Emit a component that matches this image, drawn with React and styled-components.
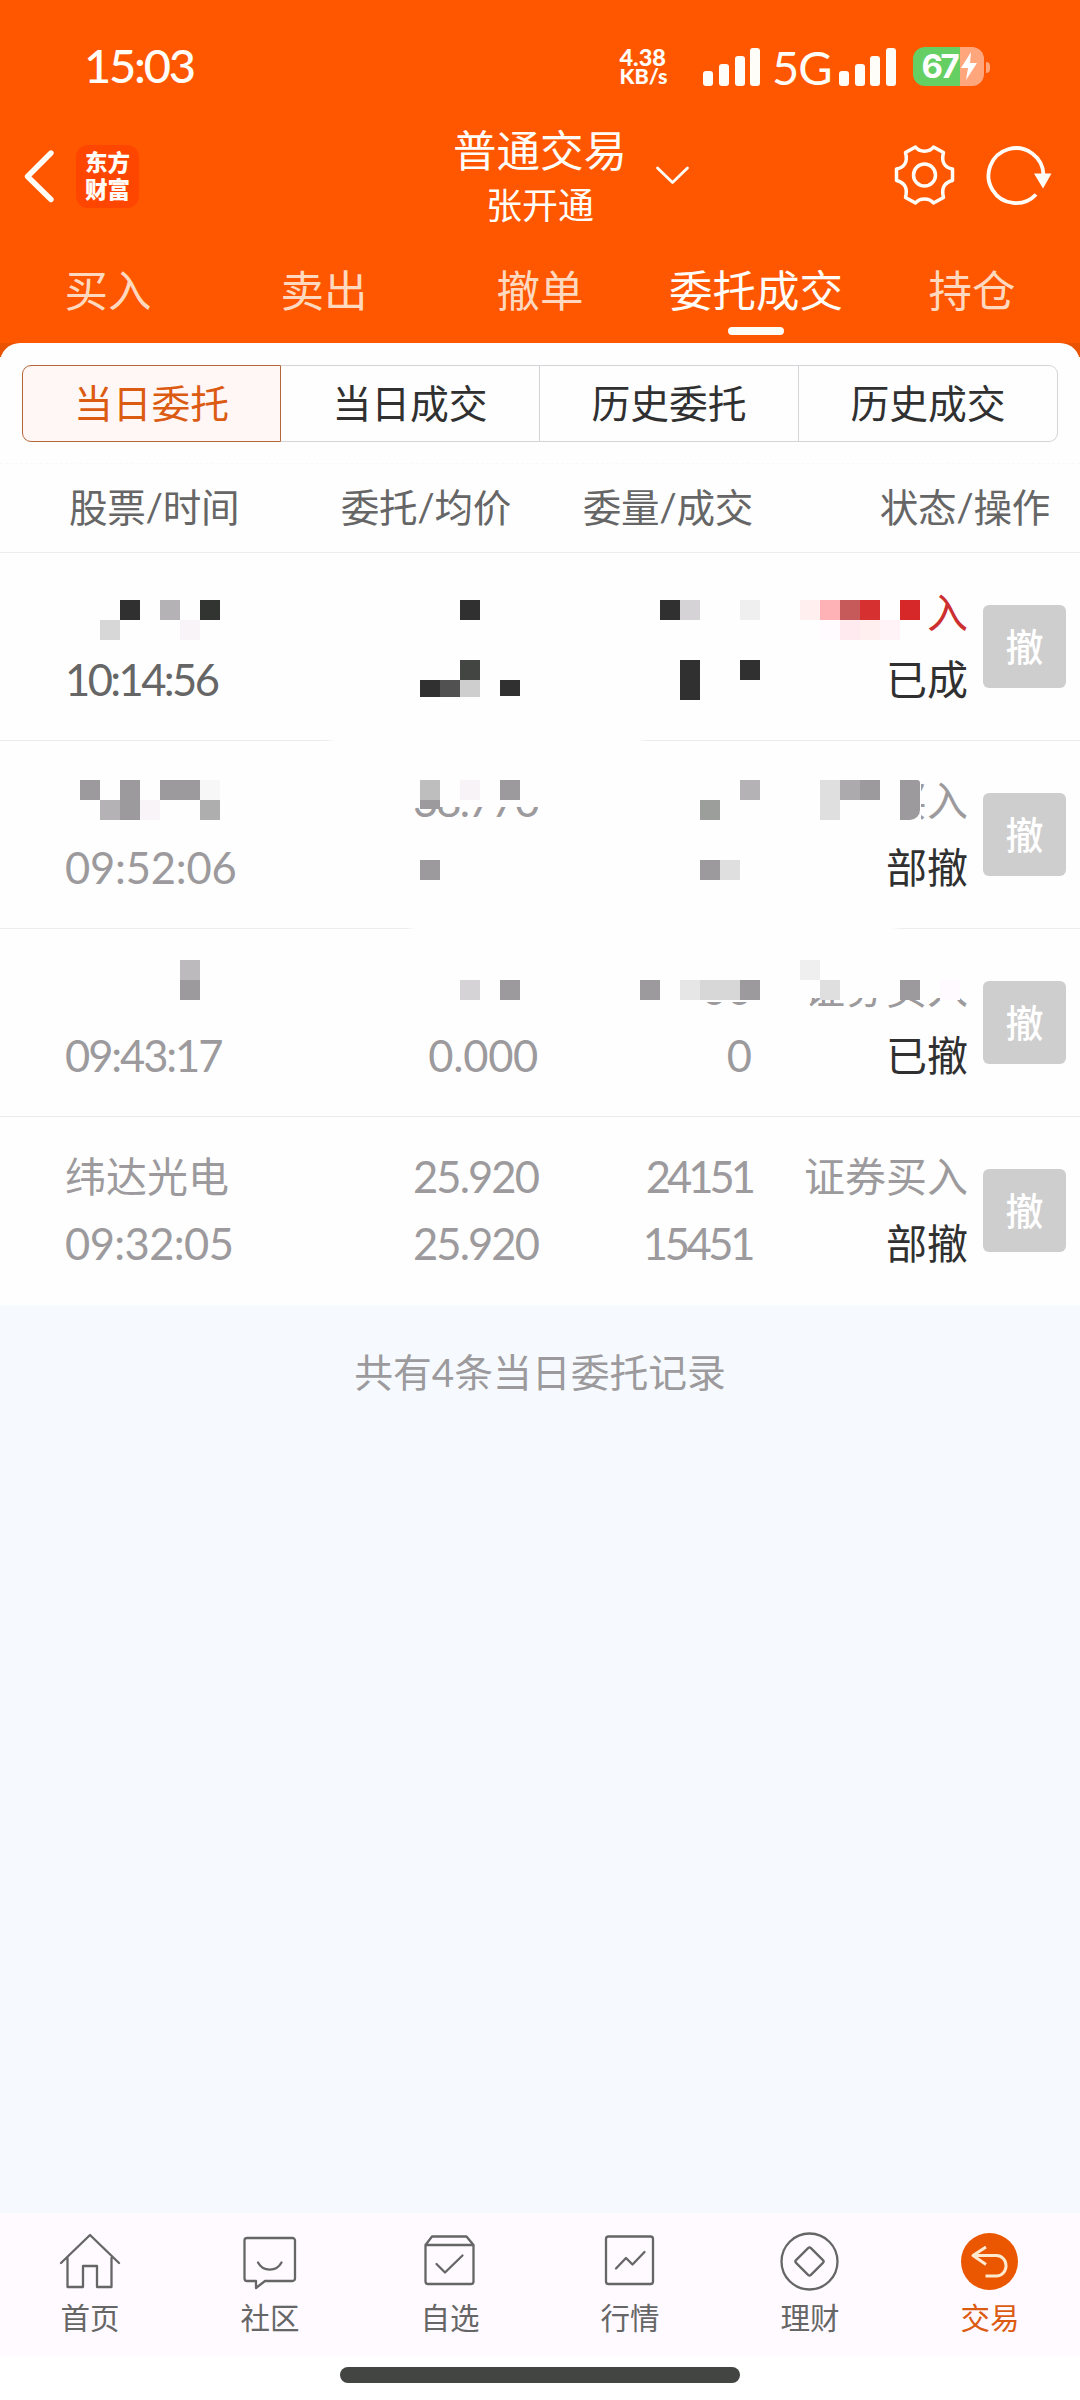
import React from "react";
import styled, { createGlobalStyle } from "styled-components";

const GlobalStyle = createGlobalStyle`
  * { box-sizing: border-box; }
  body {
    margin: 0;
    background: #ffffff;
    font-family: "Lato", "Noto Sans CJK SC", sans-serif;
    font-weight: 400;
  }
`;

const Screen = styled.div`
  width: 1080px;
  height: 2400px;
  display: flex;
  flex-direction: column;
  overflow: hidden;
  background: #f6faff;
`;

/* ---------- top area ---------- */

const Header = styled.header`
  height: 343px;
  flex: none;
  background: #ff5700;
  color: #fffdf8;
`;

const StatusBar = styled.div`
  height: 130px;
  display: flex;
  align-items: center;
  padding: 4px 90px 0 84px;
`;

const Clock = styled.div`
  font-size: 47px;
  line-height: 60px;
  font-weight: 500;
  letter-spacing: -2.2px;
  margin: -4px auto 0 0;
`;

const NetSpeed = styled.div`
  display: flex;
  flex-direction: column;
  width: 54px;
  margin-right: 30px;
  font-weight: 900;
`;

const NetValue = styled.span`
  font-size: 23.5px;
  line-height: 19px;
`;

const NetUnit = styled.span`
  font-size: 21.5px;
  line-height: 19px;
`;

const SignalBars = styled.div`
  display: flex;
  align-items: flex-end;
  gap: 5.6px;
  height: 38px;
`;

const SignalBar = styled.i`
  width: 10px;
  height: ${(p) => p.$h}px;
  border-radius: 3px;
  background: #fffdf8;
`;

const NetType = styled.div`
  width: 79px;
  padding-left: 4px;
  text-align: center;
  font-size: 47px;
  line-height: 60px;
  letter-spacing: -1px;
`;

const BatteryBody = styled.div`
  display: flex;
  align-items: center;
  justify-content: center;
  gap: 3px;
  width: 71px;
  height: 39px;
  margin-left: 17px;
  margin-top: -2px;
  padding-left: 3px;
  border-radius: 12px;
  color: #ffffff;
  font: 700 33px/39px "Inter", sans-serif;
  letter-spacing: -2.4px;
  background: linear-gradient(90deg, #66cf63 0 66%, #ffa67c 66%);
`;

const BatteryTip = styled.i`
  width: 4px;
  height: 11px;
  margin-left: 2px;
  border-radius: 0 5px 5px 0;
  background: #ffa67c;
`;

const TitleBar = styled.div`
  height: 112px;
  display: grid;
  grid-template-columns: 440px 200px 440px;
`;

const TitleLeft = styled.div`
  display: flex;
  align-items: center;
  gap: 20px;
  padding: 0 0 20px 22px;
`;

const Logo = styled.div`
  width: 63px;
  height: 63px;
  border-radius: 12px;
  background: #ff4600;
  display: flex;
  flex-direction: column;
  align-items: center;
  justify-content: center;
  padding-bottom: 2px;
  font: 900 22.5px/27px "Noto Sans CJK SC", sans-serif;
`;

const TitleCenter = styled.div`
  display: flex;
  flex-direction: column;
  align-items: center;
`;

const Title = styled.div`
  font-size: 43.5px;
  line-height: 40px;
  white-space: nowrap;
`;

const Account = styled.div`
  font-size: 36px;
  line-height: 64px;
  padding-top: 3px;
`;

const TitleRight = styled.div`
  display: flex;
  align-items: center;
  height: 90px;
  padding-left: 12px;
`;

const TitleActions = styled.div`
  display: flex;
  align-items: center;
  gap: 28px;
  margin-left: 200px;
`;

const TabBar = styled.nav`
  display: grid;
  grid-template-columns: repeat(5, 216px);
  height: 101px;
`;

const Tab = styled.div`
  display: flex;
  flex-direction: column;
  align-items: center;
  padding-top: 12px;
  font-size: 43.5px;
  line-height: 73px;
  color: ${(p) => (p.$active ? "#fffdf8" : "#ffd9bf")};

  &::after {
    content: "";
    width: 56px;
    height: 8px;
    border-radius: 4px;
    background: ${(p) => (p.$active ? "#fffdf8" : "transparent")};
  }
`;

/* ---------- order list ---------- */

const PanelWrap = styled.main`
  flex: none;
  background: linear-gradient(#e85200 0 14px, #fefefe 14px);
`;

const Panel = styled.div`
  position: relative;
  border-radius: 20px 20px 0 0;
  background: #fefefe;
`;

const Segments = styled.div`
  display: grid;
  grid-template-columns: repeat(4, 1fr);
  height: 120px;
  padding: 22px 22px 21px;
`;

const Segment = styled.div`
  display: flex;
  align-items: center;
  justify-content: center;
  padding-bottom: 6px;
  font-size: 38.8px;
  color: ${(p) => (p.$active ? "#dc5b12" : "#303030")};
  background: ${(p) => (p.$active ? "#fff6f6" : "transparent")};
  border: 1px solid ${(p) => (p.$active ? "#b5673a" : "#d4d4d8")};
  border-left-width: ${(p) => (p.$active ? 1 : 0)}px;

  &:first-child { border-radius: 9px 0 0 9px; }
  &:last-child { border-radius: 0 9px 9px 0; }
`;

const HeadRow = styled.div`
  display: grid;
  grid-template-columns: 170px 272px 242px 297px;
  height: 90px;
  padding-left: 69px;
  border-top: 1px dashed #f8f8f8;
  border-bottom: 1px solid #ececec;
  font-size: 38.6px;
  line-height: 87px;
  letter-spacing: -0.3px;
  color: #666666;
  white-space: nowrap;
`;

const HeadCell = styled.div`
  text-align: ${(p) => (p.$left ? "left" : "right")};
`;

const OrderRow = styled.div`
  height: 187px;
  display: grid;
  grid-template-columns: 251px 222px 214px 216px 83px;
  justify-content: start;
  padding: 26px 0 0 65px;
  color: ${(p) => (p.$live ? "#666666" : "#9c9a9c")};
`;

const Divider = styled.div`
  height: 1px;
  background: ${(p) =>
    p.$from
      ? `linear-gradient(90deg, #ececec ${p.$from}px, transparent ${p.$from + 10}px ${p.$to - 10}px, #ececec ${p.$to}px)`
      : p.$last ? "transparent" : "#ececec"};
`;

const Cell = styled.div`
  display: flex;
  flex-direction: column;
  align-items: ${(p) => (p.$left ? "flex-start" : "flex-end")};
  white-space: nowrap;
`;

const Line = styled.div`
  height: 67px;
  font-size: ${(p) => (p.$num ? 43.5 : 41)}px;
  line-height: 67px;
  letter-spacing: ${(p) => p.$ls || 0}px;
  color: ${(p) => p.$color || "inherit"};
  clip-path: ${(p) => p.$clip || "none"};
`;

const CancelButton = styled.button`
  width: 83px;
  height: 83px;
  margin: 26px 0 0 15px;
  padding: 0 0 4px;
  border: 0;
  border-radius: 6px;
  background: #cecece;
  color: #ffffff;
  font: 500 38px/77px "Noto Sans CJK SC", sans-serif;
`;

const Mosaic = styled.div`
  position: absolute;
  left: 0;
  top: 257px;
  display: grid;
  grid-template-columns: repeat(54, 20px);
  grid-template-rows: repeat(20, 20px);
`;

const Tile = styled.i`
  grid-column: ${(p) => p.$x / 20 + 1} / span ${(p) => p.$w};
  grid-row: ${(p) => (p.$y - 600) / 20 + 1} / span ${(p) => p.$h};
  height: ${(p) => (p.$cut ? `${p.$cut}px` : "auto")};
  border-radius: ${(p) => p.$round || 0};
  background: ${(p) => p.$c};
`;

const Summary = styled.div`
  flex: 1;
  padding-top: 37px;
  text-align: center;
  font-size: 38.8px;
  line-height: 60px;
  color: #9c9a9c;
`;

/* ---------- bottom bar ---------- */

const BottomNav = styled.nav`
  flex: none;
  height: 143px;
  display: grid;
  grid-template-columns: repeat(6, 180px);
  background: #fefaff;
`;

const NavItem = styled.div`
  display: flex;
  flex-direction: column;
  align-items: center;
  padding-top: 17px;
  font-size: 29.5px;
  line-height: 44px;
  color: ${(p) => (p.$active ? "#dc5b12" : "#666666")};

  span { padding-top: 2px; }
`;

const HomeArea = styled.div`
  flex: none;
  height: 44px;
  display: flex;
  justify-content: center;
  padding-top: 11px;
  background: #ffffff;

  &::after {
    content: "";
    width: 400px;
    height: 16px;
    border-radius: 8px;
    background: #434542;
  }
`;

const Stroke = ({ children, w = 64, h = 64, sw = 2.3, color = "#666666" }) => (
  <svg width={w} height={h} viewBox={`0 0 ${w} ${h}`} fill="none" stroke={color}
    strokeWidth={sw} strokeLinecap="round" strokeLinejoin="round">
    {children}
  </svg>
);

const navItems = [
  { label: "首页", icon: <path d="M3 33 32 5 61 33M9.5 28V57H25V36H39V57H53.5V28" /> },
  {
    label: "社区",
    icon: (
      <>
        <path d="M9 8H54.5a2.5 2.5 0 0 1 2.5 2.5V48.5a2.5 2.5 0 0 1-2.5 2.5H27L18 58V51H9a2.5 2.5 0 0 1-2.5-2.5V10.5a2.5 2.5 0 0 1 2.5-2.5Z" />
        <path d="M20 32.5C25 42 38.5 42 43.500 32.500" />
      </>
    ),
  },
  {
    label: "自选",
    icon: (
      <>
        <path d="M7.5 15 14 6.5H48.5L55.5 15V51.5a2.5 2.5 0 0 1-2.5 2.5H10a2.5 2.5 0 0 1-2.5-2.5ZM7.5 15H55.5" />
        <path d="M18.5 34 27 42.5 44.5 25.5" />
      </>
    ),
  },
  {
    label: "行情",
    icon: (
      <>
        <rect x="8" y="6.5" width="47" height="47.5" rx="2.5" />
        <path d="M18 38.5 28 28 34.5 34.5 46.5 22" />
      </>
    ),
  },
  {
    label: "理财",
    icon: (
      <>
        <circle cx="31.5" cy="31.5" r="28" />
        <rect x="21" y="21" width="21" height="21" rx="2" transform="rotate(45 31.5 31.5)" />
      </>
    ),
  },
  {
    label: "交易",
    active: true,
    icon: (
      <>
        <circle cx="31.5" cy="31.5" r="28.5" fill="#eb5600" stroke="none" />
        <path stroke="#ffe9cf" strokeWidth="3" strokeLinecap="butt" d="M28 17 15 25.5 28 34.5M15 25.5H38.5A9.5 10.2 0 0 1 38.5 46H27.500" />
      </>
    ),
  },
];

const orders = [
  {
    live: true, time: "10:14:56", ls: -2.6, side: "证券买入", sideColor: "#cc2f2f",
    sideClip: "inset(0 0 0 122px)", status: "已成", gap: [325, 648],
  },
  {
    time: "09:52:06", ls: -0.2, side: "证券买入", sideClip: "inset(0 0 0 117px)",
    price: "38.770", priceLs: -1.9, priceClip: "inset(40px 0 0 0)", status: "部撤", gap: [405, 902],
  },
  {
    time: "09:43:17", ls: -2.1, side: "证券买入", sideClip: "inset(43px 0 0 0)",
    amount: "00", amountClip: "inset(47px 0 0 0)",
    avg: "0.000", avgLs: -0.3, done: "0", status: "已撤",
  },
  {
    name: "纬达光电", time: "09:32:05", ls: -0.6, side: "证券买入",
    price: "25.920", priceLs: -1.9, amount: "24151", amountLs: -4,
    avg: "25.920", avgLs: -1.9, done: "15451", doneLs: -3.4, status: "部撤", last: true,
  },
];

const tiles = [
  [120, 600, "#303030"], [100, 620, "#d7d7d7"], [160, 600, "#b4b2b5"], [180, 620, "#f8f4f8"],
  [200, 600, "#323432"], [460, 600, "#303030"], [460, 660, "#434542"],
  [420, 680, "#303030", 1, 1, 17], [440, 680, "#525152", 1, 1, 17], [460, 680, "#cecece", 1, 1, 17],
  [500, 680, "#303030", 1, 1, 16], 
  [660, 600, "#303030"], [680, 600, "#d6d3d6"], [740, 600, "#efefef"],
  [800, 600, "#ffefef"], [820, 600, "#ffb2b5"], [840, 600, "#c6595a"], [860, 600, "#d63031"],
  [900, 600, "#d62829"], [820, 620, "#fffbff"], [840, 620, "#ffebef"], [860, 620, "#ffefef"],
  [880, 620, "#fff3f7"], [680, 660, "#303030", 1, 2], [740, 660, "#303030"],
  [80, 780, "#9c9a9c"], [120, 780, "#9c9a9c", 1, 2], [160, 780, "#9c9a9c", 2],
  [200, 780, "#f7f7f7"], [100, 800, "#b5b2b5"], [140, 800, "#f8f4f8"], [200, 800, "#adaead"],
  [420, 780, "#bdbebd"], [420, 800, "#9c9a9c", 1, 1, 9], [460, 780, "#f7f3f7"],
  [500, 780, "#9c9a9c"], [420, 860, "#9c9a9c"], [740, 780, "#b5b2b5"], [700, 800, "#9c9e9c"],
  [820, 780, "#dedfde", 1, 2], [840, 780, "#adaaad"], [860, 780, "#9c9a9c"],
  [900, 780, "#9c9a9c", 1, 2, 0, "0 3px 10px 0"], [700, 860, "#9c9a9c"], [720, 860, "#dedfde"],
  [180, 960, "#bdbabd"], [180, 980, "#9c9a9c"], [460, 980, "#d6d3d6"], [500, 980, "#9c9a9c"],
  [640, 980, "#9c9a9c"], [680, 980, "#e6e6e6"], [700, 980, "#d7d7d7", 2], [740, 980, "#9c9a9c"],
  [800, 960, "#efefef"], [820, 980, "#dedfde"], [900, 980, "#9c9a9c"], [940, 980, "#fffaff"],
];

const Signal = () => (
  <SignalBars>
    {[15, 22, 30, 38].map((h) => <SignalBar key={h} $h={h} />)}
  </SignalBars>
);

function Order({ o }) {
  return (
    <>
      <OrderRow $live={o.live}>
        <Cell $left>
          <Line>{o.name}</Line>
          <Line $num $ls={o.ls}>{o.time}</Line>
        </Cell>
        <Cell>
          <Line $num $ls={o.priceLs} $clip={o.priceClip}>{o.price}</Line>
          <Line $num $ls={o.avgLs}>{o.avg}</Line>
        </Cell>
        <Cell>
          <Line $num $ls={o.amountLs} $clip={o.amountClip}>{o.amount}</Line>
          <Line $num $ls={o.doneLs}>{o.done}</Line>
        </Cell>
        <Cell>
          <Line $color={o.sideColor} $clip={o.sideClip}>{o.side}</Line>
          <Line $color="#303030">{o.status}</Line>
        </Cell>
        <CancelButton>撤</CancelButton>
      </OrderRow>
      <Divider $from={o.gap && o.gap[0]} $to={o.gap && o.gap[1]} $last={o.last} />
    </>
  );
}

export default function App() {
  return (
    <Screen>
      <GlobalStyle />
      <Header>
        <StatusBar>
          <Clock>15:03</Clock>
          <NetSpeed>
            <NetValue>4.38</NetValue>
            <NetUnit>KB/s</NetUnit>
          </NetSpeed>
          <Signal />
          <NetType>5G</NetType>
          <Signal />
          <BatteryBody>
            67
            <svg width="18" height="28" viewBox="0 0 18 28">
              <path d="M11 0 1 16H8L6 28 17 11H10Z" fill="#ffffff" />
            </svg>
          </BatteryBody>
          <BatteryTip />
        </StatusBar>
        <TitleBar>
          <TitleLeft>
            <Stroke w={34} h={56} sw={5.4} color="#fffdf8"><path d="M29 5 5.5 28.5 29 51.5" /></Stroke>
            <Logo><span>东方</span><span>财富</span></Logo>
          </TitleLeft>
          <TitleCenter>
            <Title>普通交易</Title>
            <Account>张开通</Account>
          </TitleCenter>
          <TitleRight>
            <Stroke w={40} h={30} sw={2.8} color="#fffdf8"><path d="M5.5 8 20.500 22.500 35.500 8" /></Stroke>
            <TitleActions>
              <Stroke sw={3.5} color="#fffdf8">
                <path d="M23.500 4C27.500 9.500 37.500 9.500 41.500 4L51.500 9.500C49 19 52.500 24.500 60.500 26L60.500 37.500C52.500 39.500 49 45 51.500 54.500L41.500 60C37.500 54.500 27.500 54.500 23.500 60L13.500 54.500C16 45 12.500 39.500 4.500 37.500L4.500 26C12.500 24.500 16 19 13.500 9.500Z" />
                <circle cx="32.500" cy="32" r="11" />
              </Stroke>
              <Stroke w={72} sw={3.8} color="#fffdf8">
                <path d="M59.500 32A27.500 27.500 0 1 0 52 51.500" strokeLinecap="butt" />
                <path d="M50 30.500H67.500L59 45.500Z" fill="#fffdf8" stroke="none" />
              </Stroke>
            </TitleActions>
          </TitleRight>
        </TitleBar>
        <TabBar>
          {["买入", "卖出", "撤单", "委托成交", "持仓"].map((t) => (
            <Tab key={t} $active={t === "委托成交"}>{t}</Tab>
          ))}
        </TabBar>
      </Header>

      <PanelWrap>
        <Panel>
          <Segments>
            {["当日委托", "当日成交", "历史委托", "历史成交"].map((t, i) => (
              <Segment key={t} $active={i === 0}>{t}</Segment>
            ))}
          </Segments>
          <HeadRow>
            <HeadCell $left>股票/时间</HeadCell>
            <HeadCell>委托/均价</HeadCell>
            <HeadCell>委量/成交</HeadCell>
            <HeadCell>状态/操作</HeadCell>
          </HeadRow>
          {orders.map((o) => <Order key={o.time} o={o} />)}
          <Mosaic>
            {tiles.map(([x, y, c, w = 1, h = 1, cut, round]) => (
              <Tile key={`${x}-${y}`} $x={x} $y={y} $c={c} $w={w} $h={h} $cut={cut} $round={round} />
            ))}
          </Mosaic>
        </Panel>
      </PanelWrap>

      <Summary>共有4条当日委托记录</Summary>

      <BottomNav>
        {navItems.map((n) => (
          <NavItem key={n.label} $active={n.active}>
            <Stroke>{n.icon}</Stroke>
            <span>{n.label}</span>
          </NavItem>
        ))}
      </BottomNav>
      <HomeArea />
    </Screen>
  );
}
